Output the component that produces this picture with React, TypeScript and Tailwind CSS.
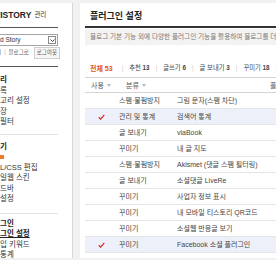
import React from "react";

const Tri = () => (
  <svg width="4" height="3" viewBox="0 0 4 3" className="inline-block ml-[3px]">
    <path d="M0 0H4L2 3Z" fill="#b8b8b8" />
  </svg>
);

const Check = () => (
  <svg width="7" height="6" viewBox="0 0 7 6">
    <path d="M0.8 3.2L2.7 5.1L6.3 0.8" fill="none" stroke="#d42a2a" strokeWidth="1.3" />
  </svg>
);

const rows = [
  { on: false, cat: "스팸·불펌방지", name: "그림 문자(스팸 차단)" },
  { on: true, cat: "관리 및 통계", name: "검색어 통계" },
  { on: false, cat: "글 보내기", name: "viaBook" },
  { on: false, cat: "꾸미기", name: "내 글 지도" },
  { on: false, cat: "스팸·불펌방지", name: "Akismet (댓글 스팸 필터링)" },
  { on: false, cat: "글 보내기", name: "소셜댓글 LiveRe" },
  { on: false, cat: "꾸미기", name: "사업자 정보 표시" },
  { on: false, cat: "꾸미기", name: "내 모바일 티스토리 QR코드" },
  { on: false, cat: "꾸미기", name: "소셜웹 반응글 보기" },
  { on: true, cat: "꾸미기", name: "Facebook 소셜 플러그인" },
];

const Sep = () => <span className="mx-[6px] text-[#cfcfcf]">|</span>;

const Item = ({ children, bold = false, u = false }: { children: React.ReactNode; bold?: boolean; u?: boolean }) => (
  <div
    className={`h-[10.5px] leading-[10.5px] whitespace-nowrap ${bold ? "font-bold text-[#222]" : "text-[#333]"} ${u ? "underline" : ""}`}
  >
    {children}
  </div>
);

export default function App() {
  return (
    <div className="w-[276px] h-[260px] overflow-hidden bg-[#f1f1f1] flex items-start gap-[7px] pt-[3px] font-['Liberation_Sans','Noto_Sans_CJK_KR',sans-serif] text-[7px] leading-none">
      <aside className="w-[73px] h-[255px] shrink-0 bg-white border-r border-[#d6d6d6] pr-[14px] overflow-hidden text-[7.5px]">
        <div className="h-[25px] border-b border-[#555] flex items-center whitespace-nowrap">
          <span className="-ml-[5px] font-bold text-[8.5px] text-[#222]">TISTORY</span>
          <span className="ml-[3px] text-[6.5px] text-[#333]">관리</span>
        </div>
        <div className="mt-[6px] -ml-[2px] w-[60px] h-[12px] border border-[#a5a5a5] flex items-center justify-between pl-[1px] pr-[1px]">
          <span className="text-[#333] whitespace-nowrap text-[6.5px]">d Story</span>
          <span className="w-[8px] h-[8px] border border-[#8a8a8a] flex items-center justify-center">
            <svg width="5" height="3" viewBox="0 0 5 3">
              <path d="M0.5 0.5L2.5 2.5L4.5 0.5" fill="none" stroke="#333" strokeWidth="0.9" />
            </svg>
          </span>
        </div>
        <div className="mt-[1px] h-[12px] flex items-center whitespace-nowrap text-[#555] text-[5.5px]">
          <span className="-ml-[9px]">관리</span>
          <span className="mx-[3px] text-[#aaa]">|</span>
          <span>블로그로</span>
          <span className="ml-[5px] h-[12px] px-[2px] border border-[#cfcfcf] bg-[#f7f7f7] flex items-center">로그아웃</span>
        </div>
        <div className="mt-[7px] h-[1px] bg-[#555]" />
        <div className="pt-[8px] pb-[6px] border-b border-[#e3e3e3]">
          <Item bold>리</Item>
          <Item>록</Item>
          <Item>고리 설정</Item>
          <Item>장</Item>
          <Item>필터</Item>
        </div>
        <div className="pt-[7px] pb-[8px] border-b border-[#e3e3e3]">
          <Item bold>기</Item>
          <div className="h-[10.5px] flex items-center">
            <span className="w-[4px] h-[4px] bg-[#f07a2a]" />
          </div>
          <Item>L/CSS 편집</Item>
          <Item>일웹 스킨</Item>
          <Item>드바</Item>
          <Item>설정</Item>
        </div>
        <div className="pt-[5px]">
          <Item bold>그인</Item>
          <Item bold u>그인 설정</Item>
          <Item>입 키워드</Item>
          <Item>통계</Item>
        </div>
      </aside>

      <main className="w-[196px] h-[255px] shrink-0 bg-white pl-[5px] overflow-hidden">
        <div className="pt-[9px] pb-[5px] border-b-2 border-[#333] pl-[5px] font-bold text-[9px] leading-[9px] text-[#222] whitespace-nowrap">
          플러그인 설정
        </div>
        <div className="mt-[1px] h-[16px] bg-[#f3f3f3] flex items-center pl-[5px] text-[6.6px] text-[#777] whitespace-nowrap">
          블로그 기본 기능 외에 다양한 플러그인 기능을 활용하여 블로그를 더욱 풍성하게 만들어 보세요.
        </div>
        <div className="mt-[17px] h-[12px] flex items-center pl-[5px] text-[6.3px] text-[#444] whitespace-nowrap">
          <span className="text-[#e0541c] font-bold text-[7px]">전체 53</span>
          <Tri />
          <Sep />
          <span>
            추천 <b>13</b>
          </span>
          <Sep />
          <span>
            글쓰기 <b>6</b>
          </span>
          <Sep />
          <span>
            글 보내기 <b>3</b>
          </span>
          <Sep />
          <span>
            꾸미기 <b>18</b>
          </span>
          <Sep />
        </div>
        <div className="mt-[3px]">
          <div className="h-[16px] border-t border-b border-[#d4d4d4] grid grid-cols-[34px_58px_1fr] items-center text-[#555] whitespace-nowrap">
            <div className="pl-[6px] flex items-center">
              사용
              <Tri />
            </div>
            <div className="pl-[7px] flex items-center">
              분류
              <Tri />
            </div>
            <div className="pl-[93px]">플러그인</div>
          </div>
          {rows.map((r, i) => (
            <div
              key={i}
              className={`h-[16px] border-b border-[#e6e6e6] grid grid-cols-[34px_58px_1fr] items-center text-[#444] whitespace-nowrap ${r.on ? "bg-[#eef0f9]" : ""}`}
            >
              <div className="pl-[13px] flex items-center">{r.on ? <Check /> : null}</div>
              <div>{r.cat}</div>
              <div>{r.name}</div>
            </div>
          ))}
        </div>
      </main>
    </div>
  );
}
